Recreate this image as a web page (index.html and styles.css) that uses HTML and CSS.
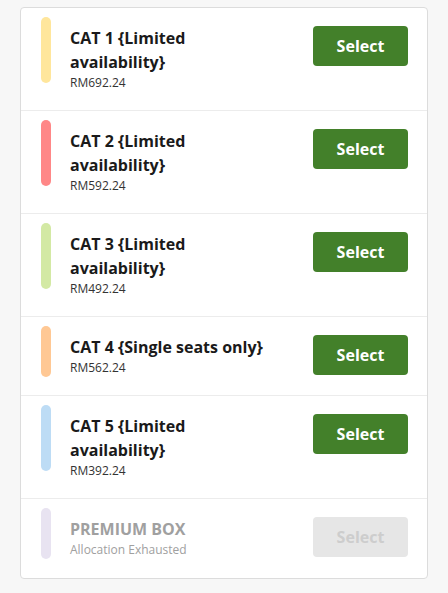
FILE: index.html
```html
<!DOCTYPE html>
<html lang="en">
  <head>
    <meta charset="UTF-8" />
    <meta name="viewport" content="width=device-width, initial-scale=1.0" />
    <title>Categories</title>
    <link rel="stylesheet" href="styles.css">
  </head>
  <body>
    <div class="ticket-list">
      <div class="ticket-row">
        <div class="bar bar-tall" style="background-color: #ffe69c"></div>
        <div class="ticket-info">
          <div class="ticket-name">CAT 1 {Limited availability}</div>
          <div class="ticket-price">RM692.24</div>
        </div>
        <button class="select-btn">Select</button>
      </div>
      <div class="ticket-row">
        <div class="bar bar-tall" style="background-color: #ff8787"></div>
        <div class="ticket-info">
          <div class="ticket-name">CAT 2 {Limited availability}</div>
          <div class="ticket-price">RM592.24</div>
        </div>
        <button class="select-btn">Select</button>
      </div>
      <div class="ticket-row">
        <div class="bar bar-tall" style="background-color: #d3e9a4"></div>
        <div class="ticket-info">
          <div class="ticket-name">CAT 3 {Limited availability}</div>
          <div class="ticket-price">RM492.24</div>
        </div>
        <button class="select-btn">Select</button>
      </div>
      <div class="ticket-row">
        <div class="bar" style="background-color: #ffc894"></div>
        <div class="ticket-info">
          <div class="ticket-name">CAT 4 {Single seats only}</div>
          <div class="ticket-price">RM562.24</div>
        </div>
        <button class="select-btn">Select</button>
      </div>
      <div class="ticket-row">
        <div class="bar bar-tall" style="background-color: #bddcf5"></div>
        <div class="ticket-info">
          <div class="ticket-name">CAT 5 {Limited availability}</div>
          <div class="ticket-price">RM392.24</div>
        </div>
        <button class="select-btn">Select</button>
      </div>
      <div class="ticket-row sold-out">
        <div class="bar" style="background-color: #e8e3f1"></div>
        <div class="ticket-info">
          <div class="ticket-name">PREMIUM BOX</div>
          <div class="ticket-price">Allocation Exhausted</div>
        </div>
        <button class="select-btn" disabled>Select</button>
      </div>
    </div>
  </body>
</html>
```

FILE: styles.css
```css
body {
    margin: 0;
    padding: 7px 20px 0 20px;
    background-color: #f7f7f7;
    font-family: "Open Sans", sans-serif;
    color: #1a1a1a;
}
.ticket-list {
    background-color: #fff;
    border: 1px solid #dcdcdc;
    border-radius: 4px;
    width: 406px;
}
.ticket-row {
    display: flex;
    align-items: flex-start;
    padding: 9px 19px 18px 20px;
    border-bottom: 1px solid #ececec;
}
.ticket-row:last-child {
    border-bottom: none;
    padding-bottom: 19px;
}
.bar {
    width: 10px;
    height: 51px;
    border-radius: 5px;
    flex-shrink: 0;
}
.bar-tall {
    height: 66px;
}
.ticket-info {
    flex: 1;
    margin: 9px 0 0 19px;
    padding-right: 40px;
}
.ticket-name {
    font-size: 16px;
    font-weight: bold;
    line-height: 24px;
    color: #1a1a1a;
}
.ticket-price {
    font-size: 12px;
    line-height: 18px;
    color: #333;
}
.select-btn {
    margin-top: 9px;
    width: 95px;
    height: 40px;
    background-color: #43802a;
    color: #fff;
    border: none;
    border-radius: 4px;
    font-family: "Open Sans", sans-serif;
    font-size: 16px;
    font-weight: bold;
    cursor: pointer;
    flex-shrink: 0;
}
.select-btn:disabled {
    background-color: #e6e6e6;
    color: #cdcdcd;
    cursor: default;
}
.sold-out .ticket-name {
    color: #a0a0a0;
}
.sold-out .ticket-price {
    color: #a0a0a0;
}
```
